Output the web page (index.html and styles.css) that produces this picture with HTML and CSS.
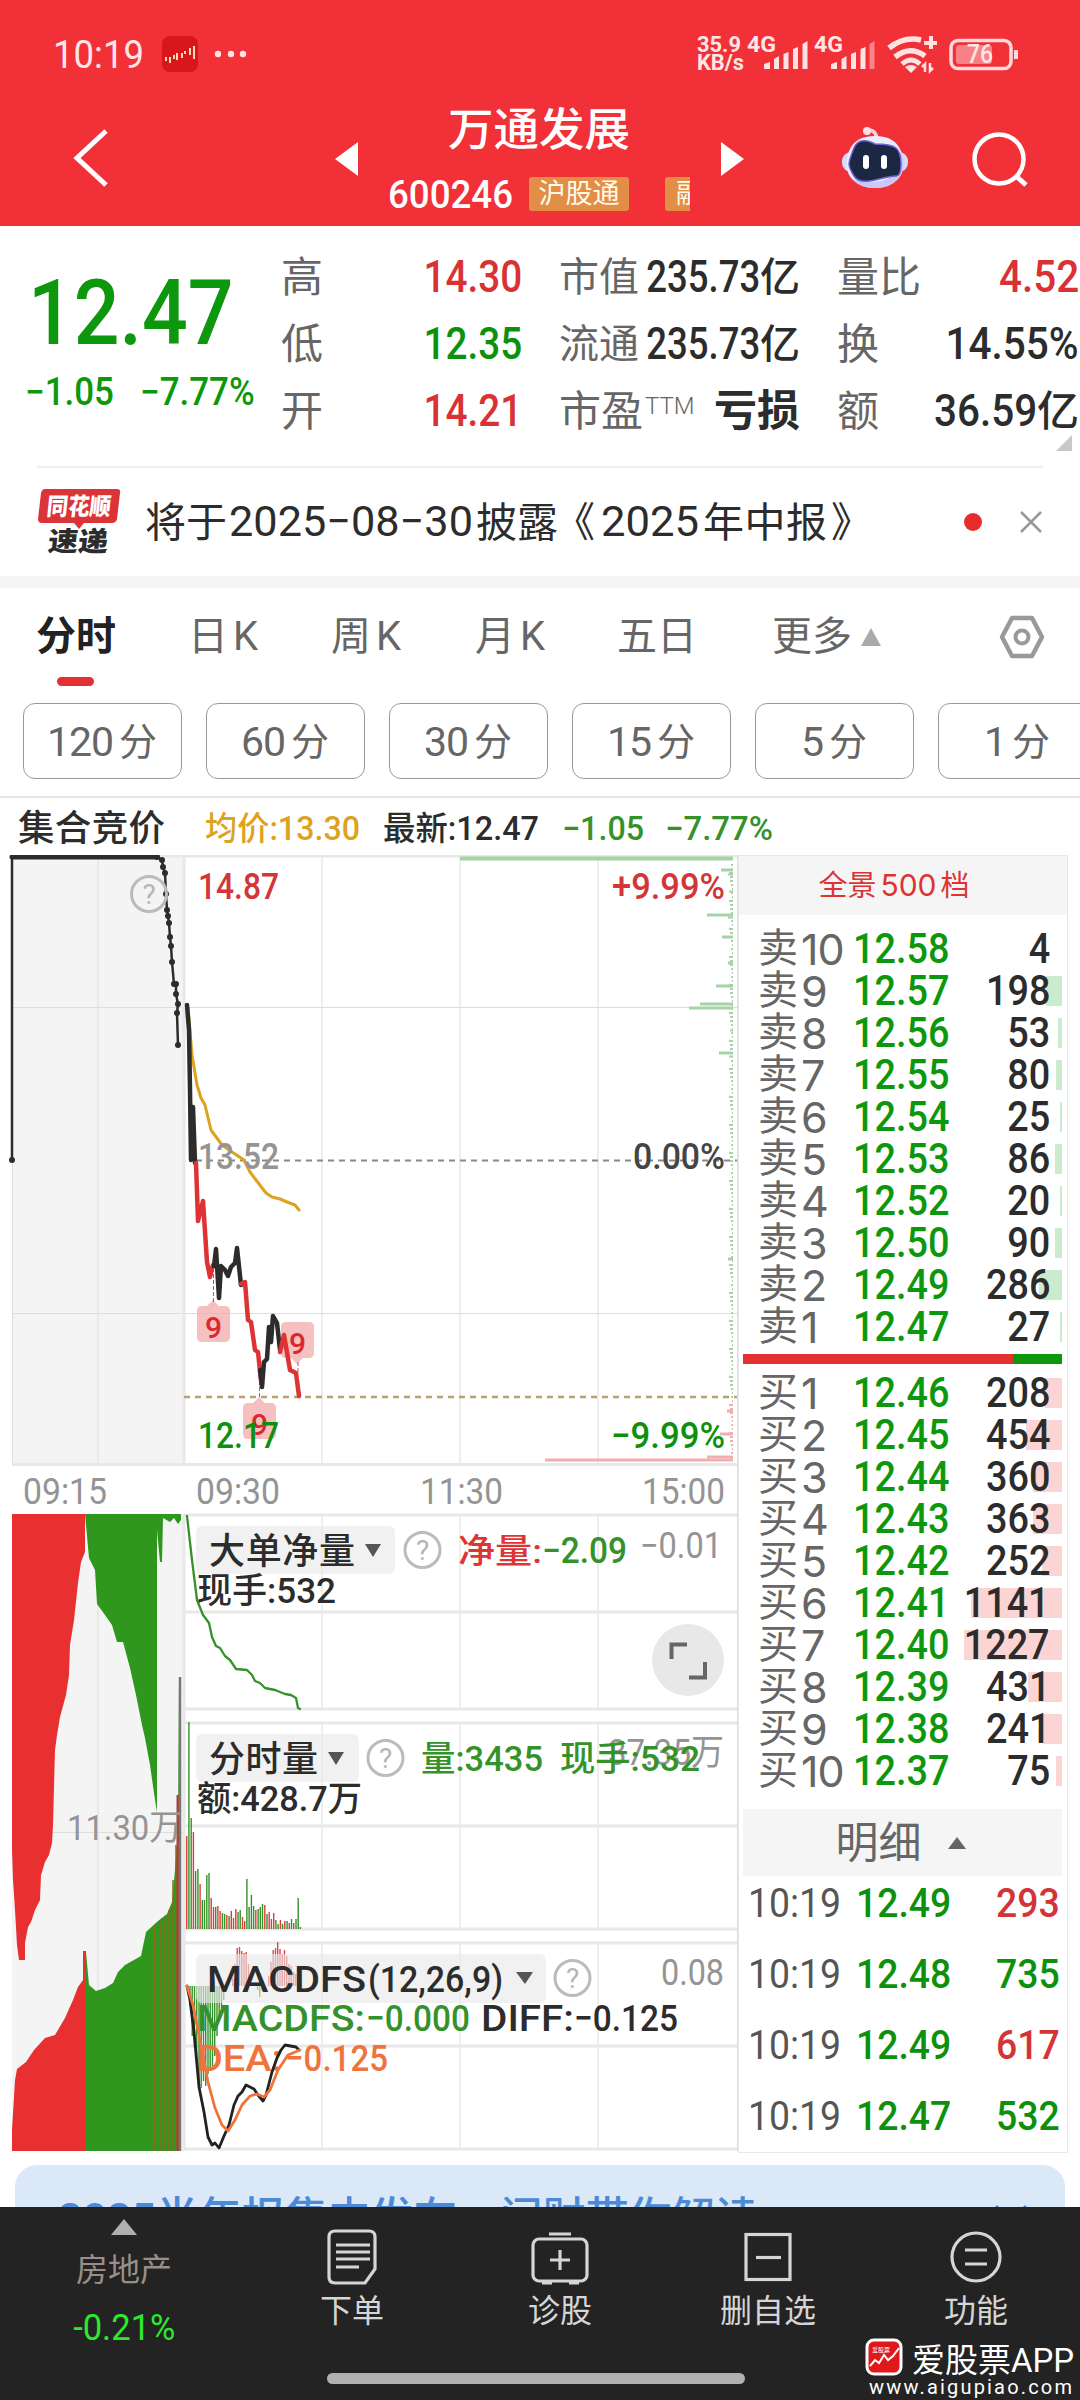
FILE: index.html
```html
<!DOCTYPE html>
<html lang="zh-CN">
<head>
<meta charset="utf-8">
<title>万通发展 600246</title>
<link rel="stylesheet" href="styles.css">
</head>
<body>
<div class="screen">
  <header class="header">
    <svg class="status" width="1080" height="90" viewBox="0 0 1080 90">
      <g class="light">
        <text x="53" y="68" font-size="39" textLength="91" lengthAdjust="spacingAndGlyphs">10:19</text>
        <rect x="162" y="36" width="36" height="36" rx="8" fill="#d9161c"/>
        <path d="M166 61v-4M170 63v-6M174 59v-4M177 60v-7M182 58v-5M185 54v-3M190 55v-7M194 59V46" fill="none" stroke="#ffd9b8" stroke-width="2"/>
        <circle cx="218" cy="54" r="3.200"/><circle cx="231" cy="54" r="3.200"/><circle cx="243" cy="54" r="3.200"/>
        <g font-size="21.500" font-weight="700">
          <text x="697" y="52" textLength="44" lengthAdjust="spacingAndGlyphs">35.9</text>
          <text x="697" y="70" textLength="47" lengthAdjust="spacingAndGlyphs">KB/s</text>
          <text x="747" y="52" textLength="29" lengthAdjust="spacingAndGlyphs">4G</text>
          <text x="814" y="52" textLength="29" lengthAdjust="spacingAndGlyphs">4G</text>
        </g>
        <path d="M764 69v-5l6-2v7zM774 69v-10l5-3v13zM783.500 69v-15l5-2v17zM793 69v-20l5-2v22zM802.500 69v-25l5-3v28zM831 69v-5l6-2v7zM841.500 69v-10l5-3v13zM851 69v-15l5-2v17zM860.500 69v-20l5-2v22z" fill="#ffe3e3"/>
        <path d="M869.500 69v-25l5-3v28z" fill="#f78488"/>
        <g fill="none" stroke="#ffe3e3" stroke-width="5.500">
          <path d="M889 48q15-12 32-8"/><path d="M895 57q15-12 30-1"/><path d="M902 64q9-8 18 0" stroke-width="5"/>
          <path d="M931 36v13M924 43h13" stroke-width="4"/>
          <path d="M925 72v-8l-3 3M930 63v8l3-3" stroke-width="2.500"/>
        </g>
        <path d="M905 67q6-4 12 0l-6 6z"/>
        <rect x="951" y="40.500" width="60" height="28" rx="7" fill="none" stroke="#ffd9d9" stroke-width="3.500"/>
        <rect x="956" y="45" width="36" height="19" rx="3" fill="#f78185"/>
        <path d="M1016 50v9" stroke="#ffd9d9" stroke-width="4"/>
        <text x="967" y="63" font-size="25" font-weight="500" textLength="26" lengthAdjust="spacingAndGlyphs">76</text>
      </g>
    </svg>
    <div class="nav">
      <svg class="nav-back" width="40" height="64" viewBox="0 0 40 64"><path d="M36 5L7 32l29 27" fill="none" stroke="#fff" stroke-width="5"/></svg>
      <svg class="nav-prev" width="23" height="34" viewBox="0 0 23 34"><path d="M0 17L23 0v34z" fill="#fff"/></svg>
      <div class="stock">
        <div class="stock-name">万通发展</div>
        <div class="stock-code"><span class="n">600246</span><b class="tag">沪股通</b><b class="tag tag-cut">融</b></div>
      </div>
      <svg class="nav-next" width="23" height="34" viewBox="0 0 23 34"><path d="M23 17L0 0v34z" fill="#fff"/></svg>
      <svg class="nav-robot" width="70" height="66" viewBox="0 0 70 66">
        <path d="M36 16q0-11-9-11" fill="none" stroke="#f6d0dc" stroke-width="3.500"/>
        <circle cx="26" cy="6" r="4" fill="#fbe0e6"/>
        <rect x="1" y="27" width="66" height="20" rx="9" fill="#d3dcfb"/>
        <path d="M34 11q20 0 26 15 6 18-3 28-8 9-23 9t-23-9Q2 44 8 26 14 11 34 11z" fill="#ececff"/>
        <path d="M60 26q6 18-3 28-8 9-23 9t-23-9q22 6 35 0 14-8 14-28z" fill="#c9c8f6"/>
        <path d="M34 19q16 0 21 4t5 16-5 12-21 4-21-4-5-12 5-16 21-4z" fill="#1c2744" stroke="#6f5fd0" stroke-width="1.500"/>
        <rect x="22" y="30" width="6" height="14" rx="3" fill="#fff"/><rect x="40" y="30" width="6" height="14" rx="3" fill="#fff"/>
      </svg>
      <svg class="nav-search" width="60" height="62" viewBox="0 0 60 62"><circle cx="28" cy="29" r="24.500" fill="none" stroke="#fff" stroke-width="4.500"/><path d="M45 46l10 9" stroke="#fff" stroke-width="5"/></svg>
    </div>
  </header>

  <section class="quote">
    <div class="last">
      <div class="last-price">12.47</div>
      <div class="last-diff"><span>−1.05</span><span>−7.77%</span></div>
    </div>
    <dl class="stats">
      <dt>高</dt><dd class="up"><i>14.30</i></dd><dt class="s">市值</dt><dd class="m"><i>235.73</i>亿</dd><dt>量比</dt><dd class="up w"><i>4.52</i></dd>
      <dt>低</dt><dd class="down"><i>12.35</i></dd><dt class="s">流通</dt><dd class="m"><i>235.73</i>亿</dd><dt>换</dt><dd class="w"><i>14.55%</i></dd>
      <dt>开</dt><dd class="up"><i>14.21</i></dd><dt class="pe">市盈<sup>TTM</sup></dt><dd class="loss">亏损</dd><dt>额</dt><dd class="w"><i>36.59</i>亿</dd>
    </dl>
    <span class="corner"></span>
  </section>

  <section class="news">
    <svg width="84" height="70" viewBox="0 0 84 70">
      <path d="M8 2h72q4 0 3 4l-3 26q-1 4-5 4H47l-5 6-5-6H5q-4 0-4-4L4 6q1-4 4-4z" fill="#dc3436"/>
      <g class="logo"><text x="12" y="28" font-size="24" fill="#fff" textLength="64" lengthAdjust="spacingAndGlyphs" transform="skewX(-6)">同花顺</text>
      <text x="17" y="64" font-size="27" fill="#222" textLength="60" lengthAdjust="spacingAndGlyphs" transform="skewX(-6)">速递</text></g>
    </svg>
    <svg class="news-text" width="730" height="60" viewBox="0 0 730 60">
      <text x="-1" y="46" font-size="41" textLength="82">将于</text>
      <text x="83" y="45" font-size="43" textLength="244" lengthAdjust="spacingAndGlyphs">2025−08−30</text>
      <text x="330" y="46" font-size="41" textLength="82">披露</text>
      <text x="408" y="46" font-size="41">《</text>
      <text x="455" y="45" font-size="43" textLength="98" lengthAdjust="spacingAndGlyphs">2025</text>
      <text x="557" y="46" font-size="41" textLength="124">年中报</text>
      <text x="685" y="46" font-size="41">》</text>
    </svg>
    <span class="dot"></span>
    <svg class="close" width="24" height="24" viewBox="0 0 24 24"><path d="M2 2l20 20M22 2L2 22" stroke="#999" stroke-width="2.500"/></svg>
  </section>

  <nav class="tabs">
    <span class="tab on">分时</span><span class="tab t2">日<i>K</i></span><span class="tab t2">周<i>K</i></span><span class="tab t2">月<i>K</i></span><span class="tab">五日</span><span class="tab">更多</span>
    <svg class="more" width="20" height="18" viewBox="0 0 20 18"><path d="M10 0l10 18H0z" fill="#aaa"/></svg>
    <svg class="gear" width="46" height="44" viewBox="0 0 46 44"><path d="M13 3h20l10 19-10 19H13L3 22z" fill="none" stroke="#999" stroke-width="4.500" stroke-linejoin="round"/><circle cx="23" cy="22" r="6.500" fill="none" stroke="#999" stroke-width="4"/></svg>
  </nav>
  <div class="chips"><span>120<b>分</b></span><span>60<b>分</b></span><span>30<b>分</b></span><span>15<b>分</b></span><span>5<b>分</b></span><span>1<b>分</b></span></div>

  <svg class="legend" width="1080" height="57" viewBox="0 798 1080 57">
    <text x="18" y="841" font-size="36.500" class="md" textLength="147">集合竞价</text>
    <g font-size="33.500" class="md">
      <text x="205" y="840" fill="#dca220" textLength="155" lengthAdjust="spacingAndGlyphs">均价:13.30</text>
      <text x="383" y="840" textLength="156" lengthAdjust="spacingAndGlyphs">最新:12.47</text>
      <text x="562" y="840" fill="#35922b" textLength="82" lengthAdjust="spacingAndGlyphs">−1.05</text>
      <text x="665" y="840" fill="#35922b" textLength="108" lengthAdjust="spacingAndGlyphs">−7.77%</text>
    </g>
  </svg>

  <main class="board">
    <svg class="charts" width="738" height="1310" viewBox="0 855 738 1310">
      <rect x="12" y="855" width="172" height="610" fill="#f4f4f4"/>
      <rect x="12" y="1514" width="172" height="637" fill="#f4f4f4"/>
      <path class="grid" d="M98 855V1465M98 1514V2151M322 855V1465M460 855V1465M598 855V1465M322 1515V1709M460 1515V1709M598 1515V1709M322 1723V1929M460 1723V1929M598 1723V1929M322 1943V2149M460 1943V2149M598 1943V2149M12 1007.500H737M12 1313.500H737M12 1832.500H184M12.500 855V1465M737.500 855V2151"/>
      <path class="frame" d="M12 856H737M12 1464.500H737M184 1515H737M184 1612H737M184 1709H737M184 1723H737M184 1826H737M184 1929H737M184 1943H737M184 2046H737M184 2149H737M184 855V1465M184 1514V2151"/>
      <g id="depth"></g>
      <path d="M196 1160.500H737" stroke="#888" stroke-width="2" stroke-dasharray="6 5"/>
      <path d="M184 1397H737" stroke="#b9a172" stroke-width="2.500" stroke-dasharray="6 5"/>

      <g class="line" stroke="#2c2c2c">
        <path d="M12 1160V857" stroke-width="2.500"/><path d="M12 857H157" stroke-width="5"/>
        <path stroke-width="2.500" d="M157 857L162 860L163 867L165 873L166 894L167 910L168 916L169 923L170 937L171 946L172 962L174 984L176 984L176 994L178 1004L177 1013L178 1045"/>
        <path stroke-width="6" d="M12 1160v0M157 857v0M162 860v0M163 867v0M165 873v0M166 894v0M167 910v0M168 916v0M169 923v0M170 937v0M171 946v0M172 962v0M174 984v0M176 984v0M176 994v0M178 1004v0M177 1013v0M178 1045v0"/>
      </g>
      <g class="help"><circle cx="149" cy="894" r="17.500"/><text x="149" y="904">?</text></g>

      <g fill="#f3a9ab" fill-opacity=".75">
        <path d="M202 1306h5l6-6 6 6h6q5 0 5 5v26q0 5-5 5h-23q-5 0-5-5v-26q0-5 5-5z"/>
        <path d="M286 1322h23q5 0 5 5v26q0 5-5 5h-6l-6 6-6-6h-5q-5 0-5-5v-26q0-5 5-5z"/>
        <path d="M248 1403h5l6-6 6 6h6q5 0 5 5v26q0 5-5 5h-23q-5 0-5-5v-26q0-5 5-5z"/>
      </g>
      <path d="M213.500 1268V1302M259.500 1375V1398M298 1362V1373" stroke="#c05060" stroke-width="1" stroke-dasharray="4 2"/>
      <g class="line" stroke-width="4.500">
        <path stroke="#dca220" stroke-width="3" d="M188 1008L192 1055L197 1085L201 1098L205 1105L211 1130L222 1145L232 1152L244 1160L250 1172L256 1180L266 1193L272 1197L280 1199L287 1202L295 1205L299 1210"/>
        <path stroke="#2c2c2c" d="M187 1005L189 1030L190 1090L191 1160L193 1107L195 1163"/>
        <path stroke="#de3335" d="M196 1163L198 1221L203 1201L207 1262L210 1277L213 1265"/>
        <path stroke="#2c2c2c" d="M214 1266L216 1249L219 1298L221 1266L225 1270L228 1276L231 1267L235 1263L237 1248L241 1285"/>
        <path stroke="#de3335" d="M241 1284L245 1282L248 1320L251 1322L255 1350L258 1352L261 1380"/>
        <path stroke="#2c2c2c" d="M260 1370L262 1387L264 1362L267 1359L269 1327L271 1342L273 1316L277 1323L280 1350"/>
        <path stroke="#de3335" d="M280 1352L284 1335L290 1370L296 1373L299 1396"/>
      </g>
      <g class="nine"><text x="213.500" y="1338">9</text><text x="297.500" y="1354">9</text><text x="259.500" y="1435">9</text></g>
      <g class="axis" font-size="36.500">
        <text x="198" y="899" fill="#d23638" textLength="81" lengthAdjust="spacingAndGlyphs">14.87</text>
        <text x="612" y="899" fill="#d23638" textLength="113" lengthAdjust="spacingAndGlyphs">+9.99%</text>
        <text x="198" y="1169" fill="#949494" textLength="81" lengthAdjust="spacingAndGlyphs">13.52</text>
        <text x="633" y="1169" fill="#444" textLength="92" lengthAdjust="spacingAndGlyphs">0.00%</text>
        <text x="198" y="1448" fill="#0d910d" textLength="81" lengthAdjust="spacingAndGlyphs">12.17</text>
        <text x="611" y="1448" fill="#0d910d" textLength="114" lengthAdjust="spacingAndGlyphs">−9.99%</text>
      </g>
      <g class="gray" font-size="36">
        <text x="23" y="1504" textLength="84" lengthAdjust="spacingAndGlyphs">09:15</text>
        <text x="196" y="1503.500" textLength="84" lengthAdjust="spacingAndGlyphs">09:30</text>
        <text x="420" y="1503.500" textLength="83" lengthAdjust="spacingAndGlyphs">11:30</text>
        <text x="642" y="1503.500" textLength="83" lengthAdjust="spacingAndGlyphs">15:00</text>
      </g>

      <path fill="#e83030" d="M12 1514H85V1552L81 1562L78 1583L74 1620L70 1645L69 1675L66 1695L60 1717L57 1735L55 1750L53 1825L52 1843L49 1855L45 1862L41 1875L40 1900L35 1910L31 1922L28 1927L25 1943V1960H19L17 1945L15 1910L13 1880L12 1850Z"/>
      <path fill="#2f971d" d="M85 1514H181V1520L178 1524L174 1518L170 1522L163 1518L162 1562H160L157 1530V1812L155 1800L150 1765L145 1738L142 1725L136 1695L130 1668L123 1642L117 1642L112 1625L105 1615L97 1604L95 1570L89 1558Z"/>
      <path fill="#e83030" d="M12 2151V2130L15 2080L17 2069L26 2062L34 2050L45 2038L55 2035L65 2018L73 2000L78 1987L83 1980V1951H86V2151Z"/>
      <path fill="#2f971d" d="M86 1952L89 1985L96 1991L105 1988L113 1983L118 1972L125 1965L141 1956L146 1932L158 1921L167 1914L172 1902L175 1870L178 1830L179 1680H181V2151H86Z"/>
      <path d="M154.500 1926V2151M160 1922V2151M164 1918V2151M169 1910V2151M173 1880V2151M176 1845V2151" stroke="#8d6a20" stroke-width="1.500"/>
      <path d="M178 1795V2151" stroke="#a54530" stroke-width="3"/>
      <path d="M180 1677V2151" stroke="#777" stroke-width="2.500"/>
      <text class="gray" x="67" y="1840" font-size="35" textLength="115" lengthAdjust="spacingAndGlyphs">11.30万</text>

      <path class="line" stroke="#35922b" stroke-width="2.300" d="M187 1516L192 1560L197 1600L203 1615L209 1623L212 1637L216 1646L220 1648L225 1656L230 1660L236 1669L247 1670L252 1675L255 1681L260 1683L265 1688L275 1690L285 1694L291 1695L296 1698L298 1708L300 1709"/>
      <g id="volume"></g>
      <g id="macd"></g>
      <g fill="#e8e8e8" fill-opacity=".62">
        <rect x="196" y="1526" width="199" height="48" rx="6"/><rect x="196" y="1734" width="163" height="48" rx="6"/><rect x="196" y="1954" width="350" height="49" rx="6"/>
      </g>
      <path d="M365 1544h16l-8 13zM328 1752h16l-8 13zM516 1972h17l-8 12z" fill="#555"/>
      <g class="help"><circle cx="422.500" cy="1550" r="17.500"/><text x="422.500" y="1560">?</text><circle cx="385.500" cy="1758" r="17.500"/><text x="385.500" y="1768">?</text><circle cx="572.500" cy="1978" r="17.500"/><text x="572.500" y="1988">?</text></g>
      <g class="gray" font-size="36">
        <text x="640" y="1558" textLength="82" lengthAdjust="spacingAndGlyphs">−0.01</text>
        <text x="608" y="1765" textLength="116" lengthAdjust="spacingAndGlyphs">37.35万</text>
        <text x="661" y="1985" textLength="63" lengthAdjust="spacingAndGlyphs">0.08</text>
      </g>
      <g class="md" font-size="36">
        <text x="209" y="1564" textLength="146">大单净量</text>
        <text x="197" y="1603" font-size="35" textLength="139" lengthAdjust="spacingAndGlyphs">现手:532</text>
        <text x="458" y="1563" font-size="34" fill="#dd3436" textLength="84" lengthAdjust="spacingAndGlyphs">净量:</text>
        <text x="542" y="1563" fill="#35922b" textLength="85" lengthAdjust="spacingAndGlyphs">−2.09</text>
        <text x="209" y="1772" textLength="109">分时量</text>
        <text x="197" y="1811" font-size="35" textLength="165" lengthAdjust="spacingAndGlyphs">额:428.7万</text>
        <g fill="#35922b" font-size="35"><text x="421" y="1771" textLength="122" lengthAdjust="spacingAndGlyphs">量:3435</text><text x="560" y="1771" textLength="140" lengthAdjust="spacingAndGlyphs">现手:532</text></g>
        <g font-size="37">
          <text x="207" y="1992" textLength="159" lengthAdjust="spacingAndGlyphs">MACDFS</text>
          <text x="368" y="1992" textLength="135" lengthAdjust="spacingAndGlyphs">(12,26,9)</text>
          <text x="197" y="2031" fill="#35922b" textLength="168" lengthAdjust="spacingAndGlyphs">MACDFS:</text>
          <text x="366" y="2031" fill="#35922b" textLength="104" lengthAdjust="spacingAndGlyphs">−0.000</text>
          <text x="481" y="2031" textLength="93" lengthAdjust="spacingAndGlyphs">DIFF:</text>
          <text x="574" y="2031" textLength="104" lengthAdjust="spacingAndGlyphs">−0.125</text>
          <text x="197" y="2071" fill="#ee743c" textLength="85" lengthAdjust="spacingAndGlyphs">DEA:</text>
          <text x="285" y="2071" fill="#ee743c" textLength="103" lengthAdjust="spacingAndGlyphs">−0.125</text>
        </g>
      </g>
      <path class="line" stroke="#222" stroke-width="2.800" d="M187 1986L190 2000L194 2032L199 2087L204 2112L208 2137L212 2145L215 2143L219 2148L224 2136L229 2125L234 2105L238 2096L242 2092L246 2085L254 2089L258 2095L263 2101L266 2095L272 2072L277 2058L281 2050L285 2045L296 2047L299 2050"/>
      <path class="line" stroke="#ee743c" stroke-width="2.800" d="M187 1986L193 2005L200 2040L208 2082L215 2108L222 2125L228 2131L235 2120L242 2105L250 2096L257 2094L264 2097L270 2090L278 2070L288 2055L300 2050"/>
      <circle cx="688" cy="1660" r="36" fill="#e6e6e6" fill-opacity=".9"/>
      <path d="M671.500 1659V1644.500H687M705 1662V1677.500H689" fill="none" stroke="#666" stroke-width="4"/>
    </svg>

    <aside class="book">
      <div class="book-head">全景<i>500</i>档</div>
      <div id="asks" class="levels"></div>
      <div class="ratio"><span></span></div>
      <div id="bids" class="levels"></div>
      <div class="trades-head">明细<svg width="18" height="12" viewBox="0 0 18 12"><path d="M9 0l9 12H0z" fill="#666"/></svg></div>
      <div id="trades"></div>
    </aside>
  </main>

  <div class="banner"><span>2025半年报集中发布，问财带你解读</span><svg width="34" height="34" viewBox="0 0 34 34"><path d="M2 2l30 30M32 2L2 32" stroke="#4d8ad6" stroke-width="3"/></svg></div>

  <footer class="dock">
    <div class="index"><svg width="26" height="16" viewBox="0 0 26 16"><path d="M13 0l13 16H0z" fill="#b0b0b0"/></svg><span>房地产</span><b>-0.21%</b></div>
    <div class="item"><svg width="60" height="60" viewBox="0 0 60 60"><path d="M13 4h34q6 0 6 6v32L43 56H13q-6 0-6-6V10q0-6 6-6zM14 18h34M14 25h34M14 32h34M14 40h23"/></svg>下单</div>
    <div class="item"><svg width="60" height="60" viewBox="0 0 60 60"><rect x="3" y="12" width="54" height="42" rx="6"/><path d="M19 7h22M30 23v20M20 33h20M12 56h10M39 56h10"/></svg>诊股</div>
    <div class="item"><svg width="60" height="60" viewBox="0 0 60 60"><rect x="8" y="7.500" width="44" height="45"/><path d="M18 30.500h25"/></svg>删自选</div>
    <div class="item"><svg width="60" height="60" viewBox="0 0 60 60"><circle cx="30" cy="30" r="24"/><path d="M19 23h22M19 37h22"/></svg>功能</div>
    <div class="home"></div>
    <svg class="mark" width="216" height="64" viewBox="864 2336 216 64">
      <rect x="867" y="2340" width="34" height="34" rx="7" fill="#e0181c" stroke="#fff" stroke-width="3"/>
      <path d="M870 2366l5-6 4 3 5-8 4 5 5-4 6-8" fill="none" stroke="#fff" stroke-width="2"/>
      <text x="872" y="2352" font-size="6">爱股票</text>
      <text x="912" y="2372" font-size="33" textLength="162" lengthAdjust="spacingAndGlyphs">爱股票APP</text>
      <text x="869" y="2394" font-size="20" textLength="203">www.aigupiao.com</text>
    </svg>
  </footer>
</div>
<script src="script.js"></script>
</body>
</html>
```
FILE: styles.css
```css
* { box-sizing: border-box; }
body { margin: 0; background: #fff; color: #2c2c2c; font-family: Roboto, "Noto Sans CJK SC", sans-serif; }
i { font-style: normal; }
svg { display: block; flex: none; }
text { font-family: Roboto, "Noto Sans CJK SC", sans-serif; fill: #2c2c2c; }
text[fill="#d23638"] { fill: #d23638; }
.screen { width: 1080px; height: 2400px; overflow: hidden; display: flex; flex-direction: column; }

.header { height: 226px; background: #f13038; color: #fff; flex: none; }
.light, .light text { fill: #ffe6e6; }
.nav { display: flex; align-items: flex-start; height: 136px; }
.nav-back { margin: 36px 0 0 70px; }
.nav-prev { margin: 52px 0 0 225px; }
.stock { width: 363px; padding-left: 31px; }
.stock-name { margin-top: 11px; padding-left: 59px; font-size: 45.500px; line-height: 60px; font-weight: 500; white-space: nowrap; }
.stock-code { display: flex; align-items: center; height: 34px; margin-top: 16px; font-size: 39px; font-weight: 500; width: 301px; overflow: hidden; }
.n { display: block; width: 141px; flex: none; transform: scaleX(.94); transform-origin: left; margin-top: 2px; margin-left: -1px; }
.tag { flex: none; width: 100px; height: 34px; border-radius: 3px; background: #e28e47; color: #fffbe9; font-size: 27px; font-weight: 400; line-height: 34px; text-align: center; }
.tag-cut { margin-left: 36px; text-align: left; padding-left: 11px; }
.nav-next { margin-top: 52px; }
.nav-robot { margin: 35px 0 0 97px; }
.nav-search { margin: 40px 0 0 60px; }

.quote { position: relative; height: 240px; flex: none; display: flex; }
.last { width: 282px; color: #0d970d; flex: none; }
.last-price { margin: 41px 0 0 28px; height: 92px; line-height: 92px; font-size: 91px; font-weight: 500; transform: scaleX(.885); transform-origin: left; }
.last-diff { display: flex; margin-top: 11px; font-size: 38px; line-height: 44px; font-weight: 500; padding-left: 25px; }
.last-diff span { width: 115px; white-space: nowrap; transform: scaleX(.92); transform-origin: left; }
.stats { margin: 18px 0 0; display: grid; grid-template-columns: 90px 188px 90px 188px 90px 152px; grid-auto-rows: 67px; line-height: 67px; font-size: 42px; white-space: nowrap; width: 798px; height: 201px; flex: none; margin-left: -1px; }
.stats dt { color: #666; margin: 0; }
.stats dt.s { font-size: 40px; }
.stats dd { margin: 0; display: flex; justify-content: flex-end; font-weight: 500; height: 67px; padding-right: 37px; }
.stats dd i { font-size: 44px; transform: scaleX(.88); transform-origin: right; }
.stats dd.w { padding-right: 0; }
.stats dd.w i { transform: scaleX(.92); }
.stats dd.m { font-size: 40px; }
.stats dd.m i { transform: scaleX(.83); }
.stats .up { color: #d93234; }
.stats .down { color: #0d910d; }
.stats .loss { font-weight: 700; font-size: 43px; }
.stats sup { font-size: 24px; font-weight: 300; line-height: 0; vertical-align: 12px; margin-left: 2px; }
.stats .pe { font-size: 42px; }
.corner { position: absolute; right: 8px; bottom: 15px; border: 8px solid transparent; border-right-color: #c8c8c8; border-bottom-color: #c8c8c8; }

.news { display: flex; align-items: center; height: 110px; flex: none; border-top: 2px solid #eee; margin: 0 37px; }
.news .logo text { font-weight: 900; }
.logo text[fill="#fff"] { fill: #fff; }
.news-text { margin: -2px 0 0 25px; }
.dot { width: 18px; height: 18px; border-radius: 50%; background: #e82c2c; margin-left: 88px; }
.close { margin-left: 37px; }

.tabs { border-top: 12px solid #f5f5f5; height: 127px; flex: none; display: flex; padding-left: 36px; color: #666; font-size: 40px; line-height: 98px; white-space: nowrap; }
.tab { width: 155px; }
.tab:nth-child(2) { width: 143px; }
.tab:nth-child(3) { width: 144px; }
.tab:nth-child(4) { width: 142px; }
.tab:nth-child(1) { width: 152px; }
.tab:nth-child(6) { width: 89px; }
.tab i { margin-left: 5px; }
.tab.on { font-weight: 700; color: #222; }
.tab.on::after { content: ""; display: block; width: 37px; height: 9px; border-radius: 5px; background: #e43030; margin: -9px 0 0 21px; }
.more { margin-top: 40px; }
.gear { margin: 27px 0 0 118px; }
.chips { height: 95px; flex: none; border-bottom: 2px solid #e5e5e5; display: flex; gap: 24px; padding: 0 0 0 23px; overflow: hidden; }
.chips span { flex: none; width: 159px; height: 76px; border: 1.500px solid #999; border-radius: 12px; display: flex; justify-content: center; color: #666; font-size: 41px; line-height: 76px; letter-spacing: -1px; padding-right: 2px; }
.chips b { font-weight: 400; font-size: 38px; margin-left: 6px; }
.legend { flex: none; }
.md, .md text, .axis text { font-weight: 500; }
text[fill="#dca220"] { fill: #dca220; }
text[fill="#35922b"], g[fill="#35922b"] text { fill: #35922b; }
text[fill="#dd3436"] { fill: #dd3436; }
text[fill="#0d910d"] { fill: #0d910d; }
text[fill="#949494"] { fill: #949494; }
text[fill="#444"] { fill: #444; }
text[fill="#ee743c"] { fill: #ee743c; }

.board { display: flex; height: 1310px; flex: none; }
.grid { fill: none; stroke: #ddd; stroke-width: 1; }
.frame { fill: none; stroke: #e8e8e8; stroke-width: 3; }
.line, .line path { fill: none; stroke-linejoin: round; stroke-linecap: round; }
.help circle { fill: none; stroke: #bbb; stroke-width: 3; }
.help text { fill: #b5b5b5; font-size: 28px; text-anchor: middle; }
.nine text { fill: #d9292c; font-size: 30px; font-weight: 500; text-anchor: middle; }
.gray text, text.gray { fill: #949494; }

.book { width: 330px; height: 1298px; border: 1px solid #e8e8e8; padding-right: 5px; }
.book-head { height: 59px; margin-right: -5px; background: #f5f5f5; color: #d33; font-size: 29px; line-height: 59px; text-align: center; padding-right: 18px; }
.book-head i { font-family: Inter; font-size: 30px; margin: 0 4px; }
.levels { padding: 0 0 0 19px; }
#asks { margin-top: 13px; height: 426px; }
#bids { margin-top: 8px; height: 437px; }
.level { display: flex; align-items: center; height: 42px; line-height: 42px; position: relative; }
.level span { width: 95px; flex: none; display: flex; font-size: 40px; color: #666; white-space: nowrap; }
.level span i { font-family: Inter; font-size: 43px; margin-left: 3px; letter-spacing: -1px; }
.level b { flex: 1 1 0; min-width: 0; font-size: 42.500px; font-weight: 500; color: #0d970d; transform: scaleX(.89); transform-origin: left; position: relative; }
.level em { font-style: normal; font-size: 42.500px; font-weight: 500; text-align: right; margin-right: 12px; flex: none; transform: scaleX(.89); transform-origin: right; }
.level u { position: absolute; right: 0; top: 6px; height: 30px; background: rgba(60, 180, 70, .27); }
#bids u { background: rgba(240, 60, 60, .22); }
.ratio { height: 10px; margin-left: 4px; background: #0d970d; }
.ratio span { display: block; width: 84.500%; height: 10px; background: #e43233; }
.trades-head { height: 67px; margin-left: 4px; background: #f5f5f5; display: flex; align-items: center; justify-content: center; gap: 26px; font-size: 43px; line-height: 60px; color: #666; padding-right: 4px; }
#trades { margin-top: -9px; }
.trade { display: flex; align-items: center; height: 71px; font-size: 41.500px; padding-left: 9px; }
.trade * { transform: scaleX(.9); transform-origin: left; }
.trade span { width: 108px; color: #555; flex: none; font-weight: 400; }
.trade b { flex: 1; color: #0d910d; font-weight: 500; }
.trade em { font-style: normal; font-weight: 500; color: #0d910d; transform-origin: right; margin-right: 2px; }
.trade em.up { color: #d33436; }

.banner { height: 42px; flex: none; overflow: hidden; margin: 0 15px; border-radius: 22px 22px 0 0; background: #dae8f8; color: #4d8ad6; font-size: 43px; line-height: 60px; display: flex; justify-content: space-between; padding: 23px 37px 0 43px; font-weight: 500; }
.banner svg { margin-top: 16px; }
.banner span { white-space: nowrap; }

.dock { position: relative; height: 193px; flex: none; background: #232323; display: grid; grid-template-columns: 248px 208px 208px 208px 208px; color: #d5d5d5; font-size: 32px; text-align: center; }
.index, .item { display: flex; flex-direction: column; align-items: center; }
.index svg { margin-top: 12px; }
.index span { color: #998f88; line-height: 44px; margin-top: 13px; }
.index b { color: #2de82d; font-weight: 400; font-size: 36px; margin-top: 14px; line-height: 44px; transform: scaleX(.96); }
.item svg { margin-top: 20px; fill: none; stroke: #d5d5d5; stroke-width: 3.200; }
.item { line-height: 48px; }
.home { position: absolute; left: 327px; top: 166px; width: 418px; height: 11px; border-radius: 6px; background: #b0b0b0; }
.mark { position: absolute; right: 0; bottom: 0; }
.mark text { fill: #fff; }
```
FILE: script.js
```js
// Order book and trade list
const row = (side, n, price, qty) =>
  `<div class="level"><u style="width:${qty < 10 ? 0 : Math.max(1, Math.round(qty * 0.08))}px"></u><span>${side}<i>${n}</i></span><b>${price}</b><em>${qty}</em></div>`;
const asks = [['12.58', 4], ['12.57', 198], ['12.56', 53], ['12.55', 80], ['12.54', 25], ['12.53', 86], ['12.52', 20], ['12.50', 90], ['12.49', 286], ['12.47', 27]];
const bids = [['12.46', 208], ['12.45', 454], ['12.44', 360], ['12.43', 363], ['12.42', 252], ['12.41', 1141], ['12.40', 1227], ['12.39', 431], ['12.38', 241], ['12.37', 75]];
document.getElementById('asks').innerHTML = asks.map((a, i) => row('卖', 10 - i, a[0], a[1])).join('');
document.getElementById('bids').innerHTML = bids.map((a, i) => row('买', i + 1, a[0], a[1])).join('');
document.getElementById('trades').innerHTML = [['12.49', 293, 'up'], ['12.48', 735, ''], ['12.49', 617, 'up'], ['12.47', 532, '']]
  .map(t => `<div class="trade"><span>10:19</span><b>${t[0]}</b><em class="${t[2]}">${t[1]}</em></div>`).join('');

const bar = (x, y, w, h, c) => `<rect x="${x}" y="${y}" width="${w}" height="${h}" fill="${c}"/>`;

// Minute volume, r = rising, g = falling
const vol = '93r 207g 111g 97r 58g 60g 45r 29g 29g 54g 56g 31r 22r 22g 23r 18r 16g 15g 14r 13g 18r 11r 20r 17g 19g 12r 8r 50g 22g 34g 23g 19r 20g 22g 25g 24r 15g 17r 10r 16r 9g 5g 9r 5g 8r 8g 6r 10g 6r 10g 31g 2g'.split(' ');
document.getElementById('volume').innerHTML = vol.map((v, i) => {
  const h = parseInt(v, 10);
  return bar((186 + i * 2.23).toFixed(1), 1929 - h, 1.4, h, v.endsWith('r') ? '#d8403a' : '#35922b');
}).join('');

// MACD histogram around the zero line
const macd = [-8, -20, -50, -62, -80, -102, -102, -95, -100, -88, -85, -80, -70, -50, -35, -22, -14, 0, 0, 0, 8, 22, 38, 39, 35, 33, 34, 22, 0, 0, 0, -4, -11, -5, 0, 0, 10, 24, 36, 38, 44, 37, 32, 36, 30, 22, 20, 14, 12, 8];
document.getElementById('macd').innerHTML = macd.map((v, i) =>
  bar((187 + i * 2.25).toFixed(1), v > 0 ? 1986 - v : 1986, 1.4, Math.abs(v), v > 0 ? '#e0454a' : '#35922b')).join('');

// Traded volume by price along the right edge
const depth = [[858, 460, 4], [870, 721, 3], [875, 728, 2], [892, 729, 2], [915, 707, 3], [918, 728, 2], [937, 722, 3], [963, 728, 3], [986, 716, 3], [1004, 700, 3], [1008, 689, 3], [1031, 730, 2], [1053, 719, 3], [1057, 729, 2], [1259, 728, 3]];
const sell = [[1411, 727, 3], [1434, 720, 3], [1457, 707, 3], [1460, 545, 3]];
let out = depth.map(d => bar(d[1], d[0] - 1.5, 733 - d[1], d[2], '#a5d3a5')).join('') +
  sell.map(d => bar(d[1], d[0] - 1.5, 733 - d[1], d[2], '#f0aeb0')).join('');
for (let y = 864, i = 0; y < 1455; y += 4, i++) {
  const w = [2, 3, 1, 4, 2, 1, 3][i * 5 % 7];
  out += bar(733 - w, y, w, 2, y > 1398 ? '#f0aeb0' : '#a5d3a5');
}
document.getElementById('depth').innerHTML = out;
```
